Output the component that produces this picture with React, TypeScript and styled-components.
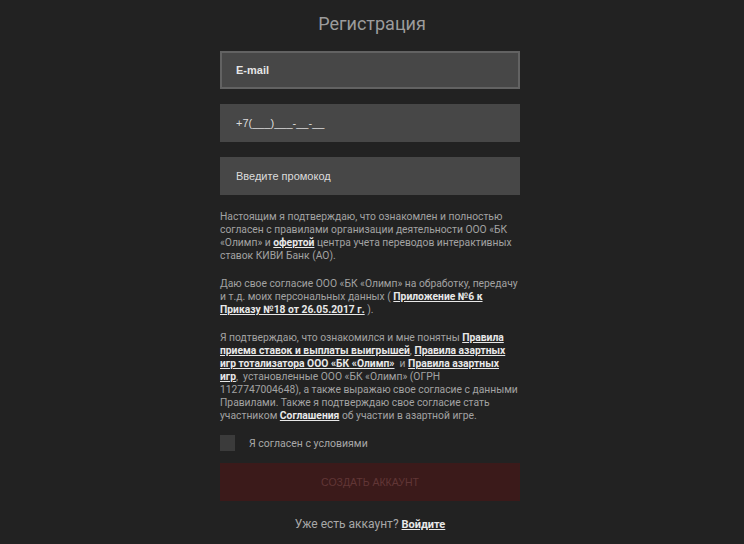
import React from "react";
import styled, { createGlobalStyle } from "styled-components";

const Global = createGlobalStyle`
  html, body { margin: 0; padding: 0; background: #222222; }
  body { font-family: Roboto, "Liberation Sans", Arial, sans-serif; }
  * { box-sizing: border-box; }
`;

const Page = styled.div`
  width: 744px;
  height: 544px;
  background: #222222;
  display: flex;
  flex-direction: column;
  align-items: center;
  overflow: hidden;
`;

const Title = styled.h1`
  margin: 11px 0 0;
  height: 26px;
  font-family: Roboto, "Liberation Sans", sans-serif;
  font-weight: 400;
  font-size: 18px;
  line-height: 26px;
  color: #9c9c9c;
`;

const Form = styled.div`
  width: 300px;
  margin-top: 14px;
  margin-right: 4px;
  display: flex;
  flex-direction: column;
`;

const Field = styled.div<{ $focused?: boolean }>`
  height: 38px;
  background: #474747;
  border: 2px solid ${(p) => (p.$focused ? "#626262" : "#474747")};
  display: flex;
  align-items: center;
  padding-left: 14px;
  margin-bottom: 15px;
  font-family: "Liberation Sans", Arial, sans-serif;
  font-size: 11px;
  font-weight: ${(p) => (p.$focused ? 700 : 400)};
  color: ${(p) => (p.$focused ? "#e6e6e6" : "#dcdcdc")};
`;

const Terms = styled.div`
  padding-right: 2px;
  font-family: Roboto, "Liberation Sans", sans-serif;
  font-size: 10.3px;
  line-height: 13px;
  color: #a3a3a3;
`;

const Para = styled.p`
  margin: 0 0 15px;
  &:last-child { margin-bottom: 0; }
`;

const Link = styled.a`
  color: #e8e8e8;
  font-weight: 700;
  text-decoration: underline;
`;

const CheckRow = styled.label`
  display: flex;
  align-items: center;
  gap: 14px;
  margin-top: 13px;
  height: 16px;
  font-family: Roboto, "Liberation Sans", sans-serif;
  font-size: 10.5px;
  color: #a8a8a8;
`;

const Box = styled.span`
  width: 15px;
  height: 16px;
  background: #3b3b3b;
`;

const Submit = styled.button`
  margin-top: 12px;
  height: 38px;
  width: 100%;
  border: none;
  background: #3b1a1a;
  color: #613636;
  font-family: "Liberation Sans", Arial, sans-serif;
  font-size: 10.5px;
  text-transform: uppercase;
  cursor: default;
`;

const Footer = styled.div`
  margin-top: 16px;
  text-align: center;
  font-family: Roboto, "Liberation Sans", sans-serif;
  font-size: 12px;
  color: #a8a8a8;
`;

const FooterLink = styled.a`
  color: #e8e8e8;
  font-size: 11px;
  font-weight: 700;
  text-decoration: underline;
`;

export default function App() {
  return (
    <Page>
      <Global />
      <Title>Регистрация</Title>
      <Form>
        <Field $focused>E-mail</Field>
        <Field>+7(___)___-__-__</Field>
        <Field>Введите промокод</Field>
        <Terms>
          <Para>
            Настоящим я подтверждаю, что ознакомлен и полностью согласен с правилами организации деятельности ООО «БК «Олимп» и <Link>офертой</Link> центра учета переводов интерактивных ставок КИВИ Банк (АО).
          </Para>
          <Para>
            Даю свое согласие ООО «БК «Олимп» на обработку, передачу и т.д. моих персональных данных ( <Link>Приложение №6 к Приказу №18 от 26.05.2017 г.</Link> ).
          </Para>
          <Para>
            Я подтверждаю, что ознакомился и мне понятны <Link>Правила приема ставок и выплаты выигрышей</Link>, <Link>Правила азартных игр тотализатора ООО «БК «Олимп»</Link> &nbsp;и <Link>Правила азартных игр</Link>, &nbsp;установленные ООО «БК «Олимп» (ОГРН 1127747004648), а также выражаю свое согласие с данными Правилами. Также я подтверждаю свое согласие стать участником <Link>Соглашения</Link> об участии в азартной игре.
          </Para>
        </Terms>
        <CheckRow>
          <Box />
          Я согласен с условиями
        </CheckRow>
        <Submit>Создать аккаунт</Submit>
        <Footer>
          Уже есть аккаунт? <FooterLink>Войдите</FooterLink>
        </Footer>
      </Form>
    </Page>
  );
}
